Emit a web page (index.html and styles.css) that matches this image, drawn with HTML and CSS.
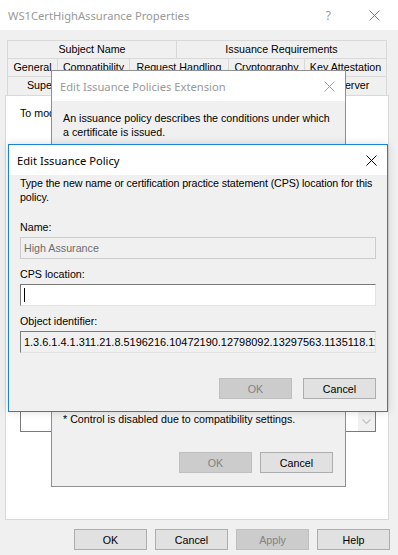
FILE: index.html
```html
<!DOCTYPE html>
<html lang="en">
<head>
    <meta charset="UTF-8">
    <title>WS1CertHighAssurance Properties</title>
    <link rel="stylesheet" href="styles.css">
</head>
<body>
    <div class="window">
        <div class="titlebar">
            <span class="title">WS1CertHighAssurance Properties</span>
            <span class="help">?</span>
            <svg class="close" width="11" height="11" viewBox="0 0 11 11"><path d="M0.5 0.5L10.5 10.5M10.5 0.5L0.5 10.5" stroke="#7a7a7a" stroke-width="1"/></svg>
        </div>

        <div class="tabs">
            <div class="tabrow">
                <div class="tab t-subject">Subject Name</div>
                <div class="tab t-issreq">Issuance Requirements</div>
            </div>
            <div class="tabrow">
                <div class="tab t-general">General</div>
                <div class="tab t-compat">Compatibility</div>
                <div class="tab t-request">Request Handling</div>
                <div class="tab t-crypto">Cryptography</div>
                <div class="tab t-keyatt">Key Attestation</div>
            </div>
            <div class="tabrow front">
                <div class="tab t-super">Superseded Templates</div>
                <div class="tab t-ext">Extensions</div>
                <div class="tab t-sec">Security</div>
                <div class="tab t-server">Server</div>
            </div>
        </div>

        <div class="panel">
            <p class="line first">To modify an extension, select it, and then click Edit.</p>
            <p class="line second">Extensions included in this template:</p>
            <div class="listbox"></div>
            <p class="line">Description of Issuance Policies:</p>
            <div class="descbox">
                <div class="scrollbar">
                    <svg width="9" height="6" viewBox="0 0 9 6"><path d="M0.5 0.5L4.5 4.5L8.5 0.5" fill="none" stroke="#c0c0c0" stroke-width="1.2"/></svg>
                </div>
            </div>
        </div>

        <div class="buttons">
            <button class="btn">OK</button>
            <button class="btn">Cancel</button>
            <button class="btn" disabled>Apply</button>
            <button class="btn">Help</button>
        </div>
    </div>

    <!-- inactive parent dialog -->
    <div class="dialog policies">
        <div class="dlg-title">
            <span class="title">Edit Issuance Policies Extension</span>
            <svg class="close" width="11" height="11" viewBox="0 0 11 11"><path d="M0.5 0.5L10.5 10.5M10.5 0.5L0.5 10.5" stroke="#a0a0a0" stroke-width="1"/></svg>
        </div>
        <div class="dlg-body">
            <p class="text">An issuance policy describes the conditions under which a certificate is issued.</p>
            <p class="text note">* Control is disabled due to compatibility settings.</p>
            <div class="dlg-buttons">
                <button class="btn" disabled>OK</button>
                <button class="btn">Cancel</button>
            </div>
        </div>
    </div>

    <!-- active dialog -->
    <div class="dialog policy">
        <div class="dlg-title">
            <span class="title">Edit Issuance Policy</span>
            <svg class="close" width="11" height="11" viewBox="0 0 11 11"><path d="M0.5 0.5L10.5 10.5M10.5 0.5L0.5 10.5" stroke="#000" stroke-width="1"/></svg>
        </div>
        <div class="dlg-body">
            <p class="text intro">Type the new name or certification practice statement (CPS) location for this policy.</p>
            <label class="label first">Name:</label>
            <div class="field disabled">High Assurance</div>
            <label class="label">CPS location:</label>
            <div class="field edit"><span class="caret"></span></div>
            <label class="label">Object identifier:</label>
            <div class="field readonly">1.3.6.1.4.1.311.21.8.5196216.10472190.12798092.13297563.1135118.11.1402006.4800421</div>
            <div class="dlg-buttons">
                <button class="btn" disabled>OK</button>
                <button class="btn">Cancel</button>
            </div>
        </div>
    </div>
</body>
</html>
```

FILE: styles.css
```css
body {
    margin: 0;
    padding: 0;
    background-color: #f0f0f0;
    font-family: "Liberation Sans", Arial, sans-serif;
    font-size: 10.7px;
    color: #000;
}

p {
    margin: 0;
}

.window {
    position: relative;
    width: 398px;
    height: 555px;
    background-color: #f0f0f0;
    overflow: hidden;
}

.titlebar {
    display: flex;
    align-items: center;
    height: 30px;
    background-color: #fff;
    padding-left: 8px;
}

.titlebar .title {
    font-family: "Noto Sans", sans-serif;
    font-size: 11.2px;
    color: #999;
    flex: 1;
}

.titlebar .help {
    font-family: "Noto Sans", sans-serif;
    font-size: 12px;
    color: #999;
    margin-right: 38px;
}

.titlebar .close {
    margin-right: 18px;
}

/* tab strip */
.tabs {
    padding: 10px 0 0 7px;
}

.tabrow {
    display: flex;
    height: 18px;
}

.tabrow.front {
    height: 19px;
}

.tab {
    box-sizing: border-box;
    border-top: 1px solid #d9d9d9;
    border-left: 1px solid #d9d9d9;
    text-align: center;
    line-height: 17px;
    white-space: nowrap;
    overflow: hidden;
}

.tab:last-child {
    border-right: 1px solid #d9d9d9;
}

.t-subject { width: 169px; }
.t-issreq { width: 211px; }
.t-general { width: 50px; }
.t-compat { width: 72px; }
.t-request { width: 99px; }
.t-crypto { width: 76px; }
.t-keyatt { width: 83px; }
.t-super { width: 148px; }
.t-ext { width: 100px; }
.t-sec { width: 65px; }
.t-server { width: 67px; }

.panel {
    box-sizing: border-box;
    margin-left: 5px;
    width: 384px;
    height: 425px;
    background-color: #fff;
    border: 1px solid #d9d9d9;
    padding: 10px 12px 0 14px;
}

.panel .line {
    line-height: 14px;
}

.panel .second {
    margin-top: 21px;
}

.listbox {
    height: 120px;
    margin: 4px 0 8px;
    border: 1px solid #7a7a7a;
}

.descbox {
    position: relative;
    height: 125px;
    margin-top: 4px;
    border: 1px solid #7a7a7a;
    width: 356px;
    box-sizing: border-box;
}

.scrollbar {
    position: absolute;
    right: 0;
    top: 0;
    bottom: 0;
    width: 17px;
    background-color: #f0f0f0;
    display: flex;
    align-items: flex-end;
    justify-content: center;
    padding-bottom: 6px;
    box-sizing: border-box;
}

.buttons {
    display: flex;
    justify-content: flex-end;
    gap: 8px;
    margin-top: 9px;
    padding-right: 8px;
}

.btn {
    box-sizing: border-box;
    width: 73px;
    height: 21px;
    padding: 0;
    background-color: #e1e1e1;
    border: 1px solid #adadad;
    font-family: "Liberation Sans", Arial, sans-serif;
    font-size: 10.7px;
    color: #000;
}

.btn:disabled {
    background-color: #cccccc;
    border-color: #bfbfbf;
    color: #838383;
}

/* dialogs */
.dialog {
    position: absolute;
    box-sizing: border-box;
    display: flex;
    flex-direction: column;
    background-color: #f0f0f0;
}

.policies {
    left: 51px;
    top: 70px;
    width: 295px;
    height: 417px;
    border: 1px solid #8f8f8f;
}

.policy {
    left: 8px;
    top: 144px;
    width: 380px;
    height: 268px;
    border: 1px solid #1883d7;
    box-shadow: 0 0 8px rgba(0, 0, 0, 0.15);
}

.dlg-title {
    display: flex;
    align-items: center;
    height: 30px;
    background-color: #fff;
    padding-left: 8px;
    flex: none;
}

.dlg-title .title {
    flex: 1;
    font-family: "Noto Sans", sans-serif;
    font-size: 11.2px;
}

.policies .dlg-title .title {
    color: #999;
}

.policies .dlg-title .close {
    margin-right: 10px;
}

.policy .dlg-title .close {
    margin-right: 10px;
}

.dlg-body {
    flex: 1;
    display: flex;
    flex-direction: column;
    padding: 0 11px 12px 11px;
}

.text {
    line-height: 14px;
}

.policy .intro {
    letter-spacing: -0.1px;
}

.policies .dlg-body {
    padding: 10px 12px 13px 11px;
}

.policies .note {
    margin-top: auto;
}

.dlg-buttons {
    display: flex;
    justify-content: flex-end;
    gap: 8px;
}

.policies .dlg-buttons {
    margin-top: 26px;
}

.policy .dlg-body {
    padding-top: 1px;
}

.policy .dlg-buttons {
    margin-top: auto;
    gap: 11px;
}

.label {
    display: block;
    line-height: 14px;
    margin-top: 8px;
}

.label.first {
    margin-top: 16px;
}

.field {
    box-sizing: border-box;
    margin-top: 3px;
    height: 22px;
    line-height: 20px;
    padding-left: 3px;
    white-space: nowrap;
    overflow: hidden;
    border: 1px solid #7a7a7a;
}

.field.disabled {
    border-color: #cccccc;
    color: #6d6d6d;
}

.field.edit {
    background-color: #fff;
    border-color: #7a7a7a #e3e3e3 #e3e3e3 #7a7a7a;
    display: flex;
    align-items: center;
}

.caret {
    width: 1px;
    height: 14px;
    background-color: #000;
}

.field.readonly {
    font-size: 10.95px;
    border-color: #7a7a7a #e3e3e3 #e3e3e3 #7a7a7a;
}
```
